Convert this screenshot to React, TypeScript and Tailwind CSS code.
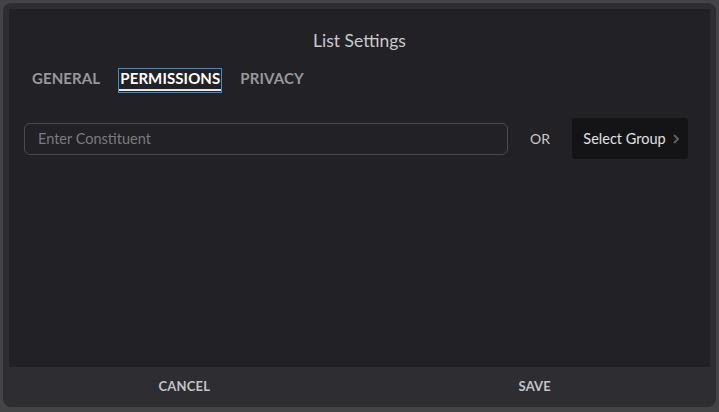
import React from "react";

const font = { fontFamily: "Lato, 'Open Sans', sans-serif" };

export default function App() {
  const tabs = ["GENERAL", "PERMISSIONS", "PRIVACY"];
  const active = "PERMISSIONS";

  return (
    <div
      className="w-[719px] h-[412px] bg-[#444446] pt-[3px] pl-[3px] pr-[3px] pb-[5px]"
      style={font}
    >
      <div className="h-full rounded-lg bg-[#2e2d32] flex flex-col pt-[6px] px-[6px]">
        <div className="flex-1 bg-[#222126] flex flex-col">
          <h2 className="pt-[20px] text-center text-[17.5px] leading-6 text-[#c9c9cc]">
            List Settings
          </h2>

          <div className="mt-[15px] flex items-center gap-[16px] pl-[21px]">
            {tabs.map((t) => (
              <button
                key={t}
                className={
                  t === active
                    ? "relative flex items-start px-[1px] h-[25px] border border-[#3b8fd0] text-white text-[15px] font-bold leading-[18px] tracking-[0.1px]"
                    : "flex items-start px-[1px] h-[25px] border border-transparent text-[#98989c] text-[15px] font-bold leading-[18px] tracking-[0.1px]"
                }
              >
                {t}
                {t === active && (
                  <span className="absolute left-0 right-0 bottom-[1px] h-[2px] bg-[#e8e8ea]" />
                )}
              </button>
            ))}
          </div>

          <div className="mt-[25px] flex items-center pl-[15px] pr-[22px]">
            <input
              placeholder="Enter Constituent"
              className="flex-1 h-[32px] rounded-md border border-[#4a494f] bg-transparent px-[13px] text-[14.5px] text-[#d0d0d2] placeholder:text-[#7b7a80] outline-none"
              style={font}
            />
            <span className="mx-[22px] text-[14px] text-[#c9c9cc]">OR</span>
            <button className="h-[41px] w-[116px] rounded-[3px] bg-[#141416] flex items-center justify-center gap-[7px] pl-[2px] text-[14.5px] text-[#e0e0e2]">
              Select Group
              <svg width="6" height="10" viewBox="0 0 6 10">
                <path d="M1 1l4 4-4 4" stroke="#5e5e62" strokeWidth="2" fill="none" />
              </svg>
            </button>
          </div>
        </div>

        <div className="h-[40px] flex">
          <button className="flex-1 text-[13px] font-bold tracking-[0.2px] text-[#c4c4c7]">
            CANCEL
          </button>
          <button className="flex-1 text-[13px] font-bold tracking-[0.2px] text-[#c4c4c7]">
            SAVE
          </button>
        </div>
      </div>
    </div>
  );
}
